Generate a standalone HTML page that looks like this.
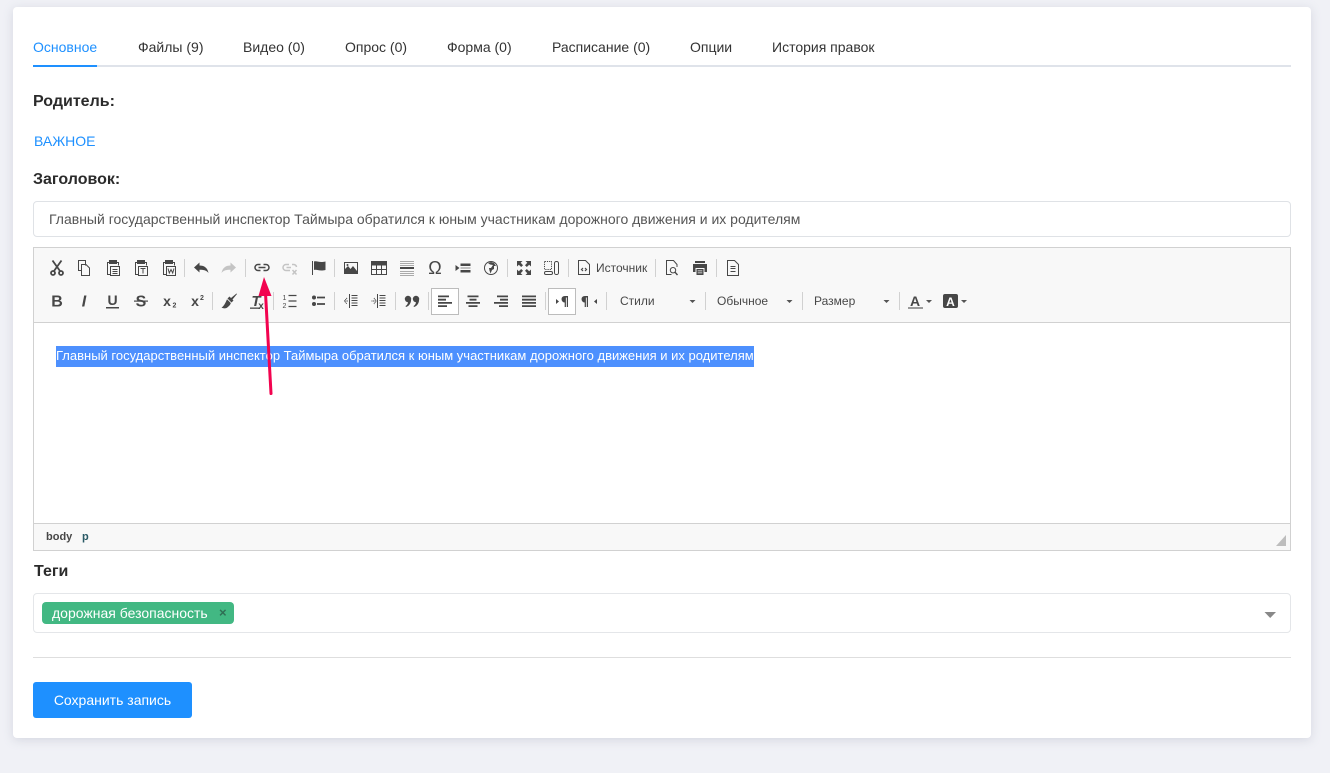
<!DOCTYPE html>
<html><head><meta charset="utf-8">
<style>
html,body{margin:0;padding:0}
body{width:1330px;height:773px;overflow:hidden;position:relative;background:#f0f1f6;font-family:"Liberation Sans",sans-serif;font-size:14px;color:#333}
.a{position:absolute;white-space:nowrap}
#card{left:13px;top:7px;width:1298px;height:731px;background:#fff;border-radius:4px;box-shadow:0 2px 10px rgba(150,155,175,.3)}
.t{top:39px;line-height:16px;color:#333}
.l{font-weight:bold;font-size:16px;color:#2b2b2b;line-height:18px}
</style></head><body>
<div class="a" id="card"></div>
<div class="a t" style="left:33px;color:#1e90ff">Основное</div>
<div class="a t" style="left:138px">Файлы (9)</div>
<div class="a t" style="left:243px">Видео (0)</div>
<div class="a t" style="left:345px">Опрос (0)</div>
<div class="a t" style="left:447px">Форма (0)</div>
<div class="a t" style="left:552px">Расписание (0)</div>
<div class="a t" style="left:690px">Опции</div>
<div class="a t" style="left:772px">История правок</div>
<div class="a" style="left:33px;top:65px;width:1258px;height:2px;background:#dfe3ea"></div>
<div class="a" style="left:33px;top:65px;width:64px;height:2px;background:#1e90ff"></div>

<div class="a l" style="left:33px;top:93px">Родитель:</div>
<div class="a" style="left:34px;top:133px;line-height:16px;color:#1e90ff">ВАЖНОЕ</div>
<div class="a l" style="left:33px;top:171px">Заголовок:</div>
<div class="a" style="left:33px;top:201px;width:1256px;height:34px;border:1px solid #dfe2e6;border-radius:4px;background:#fff"></div>
<div class="a" style="left:49px;top:211px;line-height:16px;color:#555">Главный государственный инспектор Таймыра обратился к юным участникам дорожного движения и их родителям</div>

<div class="a" style="left:33px;top:247px;width:1256px;height:302px;border:1px solid #d1d1d1;background:#fff"></div>
<div class="a" style="left:34px;top:248px;width:1256px;height:74px;background:#f8f8f8;border-bottom:1px solid #d1d1d1"></div>
<div class="a" style="left:34px;top:523px;width:1256px;height:26px;background:#f8f8f8;border-top:1px solid #d1d1d1"></div>

<div class="a" style="left:431px;top:288px;width:26px;height:25px;border:1px solid #bcbcbc;background:#fff"></div>
<div class="a" style="left:548px;top:288px;width:26px;height:25px;border:1px solid #bcbcbc;background:#fff"></div>

<svg class="a" style="left:0;top:0" width="1330" height="773" viewBox="0 0 1330 773">
<g fill="#d1d1d1">
<rect x="184" y="259" width="1" height="18"/><rect x="245" y="259" width="1" height="18"/><rect x="334" y="259" width="1" height="18"/><rect x="507" y="259" width="1" height="18"/><rect x="568" y="259" width="1" height="18"/><rect x="655" y="259" width="1" height="18"/><rect x="716" y="259" width="1" height="18"/>
<rect x="212" y="292" width="1" height="18"/><rect x="273" y="292" width="1" height="18"/><rect x="334" y="292" width="1" height="18"/><rect x="395" y="292" width="1" height="18"/><rect x="428" y="292" width="1" height="18"/><rect x="545" y="292" width="1" height="18"/><rect x="606" y="292" width="1" height="18"/><rect x="705" y="292" width="1" height="18"/><rect x="802" y="292" width="1" height="18"/><rect x="899" y="292" width="1" height="18"/>
</g>
<g fill="none" stroke="#474747" stroke-width="1">
<!-- cut -->
<g transform="translate(57,268)" stroke-width="1.800"><path d="M-4.500-7.500 3 3M4.500-7.500-3 3"/><circle cx="-4" cy="5" r="2"/><circle cx="4" cy="5" r="2"/></g>
<!-- copy -->
<g transform="translate(84,268)"><path d="M1.500-2.500V-7.500H-5.500V2.500H-2.500"/><path d="M-2.500-3.500H2L5.500 0V7.500H-2.500Z"/></g>
<!-- paste -->
<g transform="translate(113,268)"><path d="M-3-5.500H-5.500V6.500H-2.500M3-5.500H5.500V-2.500"/><rect x="-3.500" y="-7.500" width="7" height="3" fill="#474747"/><rect x="-2.500" y="-1.500" width="9" height="9"/><path d="M-.5 1.500H4.500M-.5 3.500H4.500M-.5 5.500H4.500"/></g>
<g transform="translate(141,268)"><path d="M-3-5.500H-5.500V6.500H-2.500M3-5.500H5.500V-2.500"/><rect x="-3.500" y="-7.500" width="7" height="3" fill="#474747"/><rect x="-2.500" y="-1.500" width="9" height="9"/><path d="M-.5.500H4.500M2 .5V5.500"/></g>
<g transform="translate(169,268)"><path d="M-3-5.500H-5.500V6.500H-2.500M3-5.500H5.500V-2.500"/><rect x="-3.500" y="-7.500" width="7" height="3" fill="#474747"/><rect x="-2.500" y="-1.500" width="9" height="9"/><path d="M-1 .5 .3 5 2 1.500 3.700 5 5 .5"/></g>
<!-- link -->
<g transform="translate(262,268)" stroke-width="1.500"><path d="M-1.500-3.500H-4A3 3 0 0 0-4 2.500H-1.500M1.500-3.500H4A3 3 0 0 1 4 2.500H1.500M-3.500-.5H3.500"/></g>
<!-- unlink -->
<g transform="translate(290,268)" stroke="#c4c4c4" stroke-width="1.500"><path d="M-1-3.500H-4A3 3 0 0 0-4 2.500H0M2-3.500H4A3 3 0 0 1 6.500-1M-3.500-.5H1"/><path d="M2.500 2 6.500 6.500M6.500 2 2.500 6.500"/></g>
<!-- image -->
<g transform="translate(351,268)"><rect x="-6.500" y="-5.500" width="13" height="11"/><path d="M-6 1-3-2-.5 1 2-2 6 3V5H-6Z" fill="#474747" stroke="none"/><circle cx="-3.500" cy="-3" r="1" fill="#474747" stroke="none"/></g>
<!-- table -->
<g transform="translate(379,268)"><rect x="-7.500" y="-6.500" width="15" height="13"/><rect x="-7.500" y="-6.500" width="15" height="3.500" fill="#474747"/><path d="M-7.500 1.500H7.500M-2.500-3V6.500M2.500-3V6.500"/></g>
<!-- globe -->
<g transform="translate(491,268)"><circle r="6.500"/><path d="M-3-5-1-3.500 2-3 0 0-2 0-1.500 2.500-.5 5.500 1 2 3 1 3-2 5-2 3-5 0-6Z" fill="#474747" stroke="none"/></g>
<!-- source doc -->
<g transform="translate(584,268)"><path d="M-5.500-7.500H1.500L5.500-3.500V6.500H-5.500Z"/><path d="M-1 0-2.500 1.500-1 3M1 0 2.500 1.500 1 3" stroke-width="1.200"/></g>
<!-- blocks -->
<g transform="translate(552,268)" stroke-width="1"><path d="M-7.500-6.500V1.500H-.5V-6.500Z" stroke-dasharray="1.200 1"/><rect x="-7.500" y="3.500" width="8" height="3" rx="1.400"/><rect x="2.500" y="-6.500" width="4" height="13" rx="1.800"/></g>
<!-- preview -->
<g transform="translate(672,268)"><path d="M-.5 6.500H-5.500V-7.500H1.500L5-3.500V-1"/><circle cx="1" cy="2.200" r="2.700"/><path d="M3 4.200 5.500 7" stroke-width="1.400"/></g>
<!-- templates -->
<g transform="translate(733,268)"><path d="M-5.500-7.500H1.500L5.500-3.500V7.500H-5.500Z"/><path d="M-2.500-1.500H2.500M-2.500 .5H2.500M-2.500 3.500H2.500"/></g>
<!-- lists -->
<g transform="translate(290,301)"><path d="M-1.500-5.500H6.500M-1.500 0H6.500M-1.500 5.500H6.500" stroke-width="1.200"/></g>
<g transform="translate(318,301)"><path d="M-1-3.500H7M-1 3H7" stroke-width="1.700"/></g>
<!-- outdent / indent -->
<g transform="translate(351,301)"><path d="M-1.500-7V7"/><path d="M.5-5.500H6.500M.5-3H6.500M.5-.5H6.500M.5 2H6.500M.5 4.500H6.500" stroke-width="1"/><path d="M-4-3-6.500 0-4 3M-7 0H-3" stroke-width="1" stroke-dasharray="1 .6"/></g>
<g transform="translate(379,301)"><path d="M-1.500-7V7"/><path d="M.5-5.500H6.500M.5-3H6.500M.5-.5H6.500M.5 2H6.500M.5 4.500H6.500" stroke-width="1"/><path d="M-5-3-3 0-5 3M-7.500 0H-3" stroke-width="1" stroke-dasharray="1 .6"/></g>
</g>
<g fill="#474747">
<!-- undo / redo -->
<path transform="translate(201,268)" d="M-7-.5-1.500-5.500V-2.500C3-2.500 6.500-.5 7.500 5 5.500 2.500 3 1.800-1.500 1.800V4.500Z"/>
<path transform="translate(229,268)" d="M7-.5 1.500-5.500V-2.500C-3-2.500-6.500-.5-7.500 5-5.500 2.500-3 1.800 1.500 1.800V4.500Z" fill="#c4c4c4"/>
<!-- flag -->
<g transform="translate(319,268)"><rect x="-7" y="-7" width="1" height="14"/><path d="M-5-6.500C-2-7.500 0-5 6.500-6.500V2C0 3.500-2 1-5 2Z"/></g>
<!-- hr -->
<g transform="translate(407,268)"><rect x="-7" y="-1" width="14" height="2"/><path d="M-7-7H7V-6H-7ZM-7-5H7V-4H-7ZM-7-3H7V-2H-7ZM-7 3H7V4H-7ZM-7 5H7V6H-7ZM-7 7H7V8H-7Z" fill="#aaa"/></g>
<!-- iframe -->
<g transform="translate(463,268)"><path d="M-7.500-3-3.500 0-7.500 3Z"/><rect x="-2.500" y="-4.500" width="10" height="2.500"/><rect x="-2.500" y="2" width="10" height="2.500"/><path d="M-2.500-.5H7.500V.5H-2.500Z" fill="#888"/></g>
<!-- maximize -->
<g transform="translate(524,268)"><path d="M-7-7H-1.500L-3.300-5.200-1-2.800-2.800-1-5.200-3.300-7-1.500ZM7-7H1.500L3.300-5.200 1-2.800 2.800-1 5.200-3.300 7-1.500ZM-7 7H-1.500L-3.300 5.200-1 2.800-2.800 1-5.200 3.300-7 1.500ZM7 7H1.500L3.300 5.200 1 2.800 2.800 1 5.200 3.300 7 1.500Z"/></g>
<!-- print -->
<g transform="translate(700,268)"><rect x="-5" y="-7" width="10" height="2"/><path d="M-7-4H7V4H4.500V0H-4.500V4H-7Z"/><path d="M-3.500 1H3.500V7H-3.500ZM-2.300 2.500V3.300H2.300V2.500ZM-2.300 4.500V5.300H2.300V4.500Z" fill-rule="evenodd"/></g>
<!-- ol -->
<text x="282.500" y="300" font-family="Liberation Sans" font-size="7">1</text><text x="282.500" y="308" font-family="Liberation Sans" font-size="7">2</text>
<!-- ul -->
<circle cx="314" cy="297.500" r="2"/><circle cx="314" cy="304" r="2"/>
<!-- quote -->
<g transform="translate(412,301)"><circle cx="-4" cy="-2" r="3.200"/><path d="M-1-2.500C-.5 1.500-2.500 5-6 6L-6.500 5C-4.500 4-4 2-4 .5Z"/><circle cx="4" cy="-2" r="3.200"/><path d="M7-2.500C7.500 1.500 5.500 5 2 6L1.500 5C3.500 4 4 2 4 .5Z"/></g>
<!-- brush -->
<path transform="translate(229,301)" d="M2-3 7.500-7.500 8-7 3.500-1.500 4.500-.5 2.500 1.500-1.500-2.500.5-4.500ZM-2-1.800 1.800 2C1.500 4-1 6-2.500 7-4 7.500-6 7.500-7.500 6.500-5.500 5.500-3.500 2-2-1.800Z"/>
<!-- alignments -->
<path transform="translate(445,301)" d="M-7-5.500H4V-3.700H-7ZM-7-2.200H1V-.4H-7ZM-7 1H7V2.800H-7ZM-7 4.200H2V6H-7Z"/>
<path transform="translate(473,301)" d="M-5.500-5.500H5.500V-3.700H-5.500ZM-3.500-2.200H3.500V-.4H-3.500ZM-7 1H7V2.800H-7ZM-4.500 4.200H4.500V6H-4.500Z"/>
<path transform="translate(501,301)" d="M-4-5.500H7V-3.700H-4ZM-1-2.200H7V-.4H-1ZM-7 1H7V2.800H-7ZM-2 4.200H7V6H-2Z"/>
<path transform="translate(529,301)" d="M-7-5.500H7V-3.700H-7ZM-7-2.200H7V-.4H-7ZM-7 1H7V2.800H-7ZM-7 4.200H7V6H-7Z"/>
<!-- ltr / rtl -->
<path d="M556 299 559 301.500 556 304Z"/>
<path d="M566 296H569V307H567.800V297.500H566.900V307H565.700V302.500C562 302.500 561 296 566 296Z" transform="translate(-1,0)"/>
<path d="M586 296H589V307H587.800V297.500H586.900V307H585.700V302.500C582 302.500 581 296 586 296Z" transform="translate(-1,0)"/>
<path d="M597 299 594 301.500 597 304Z"/>
<!-- combo arrows -->
<path d="M689.500 300H695.500L692.500 303ZM786.500 300H792.500L789.500 303ZM883.500 300H889.500L886.500 303ZM926 300H932L929 303ZM961 300H967L964 303Z" fill="#555"/>
<!-- colors -->
<rect x="908" y="307" width="15" height="2" fill="#9a9a9a"/>
<rect x="943" y="294" width="15" height="14" rx="2"/>
<!-- resize -->
<path d="M1286 535V546H1276Z" fill="#bdbdbd"/>
</g>
<g font-family="Liberation Sans" fill="#474747" text-anchor="middle">
<text x="57" y="306.500" font-size="16" font-weight="bold">B</text>
<text x="84" y="306.500" font-size="16" font-weight="bold" font-style="italic">I</text>
<text x="112.500" y="305" font-size="14" font-weight="bold">U</text><rect x="106" y="307" width="13" height="1.500"/>
<text x="141" y="306.500" font-size="16" font-weight="bold">S</text><rect x="134" y="300.500" width="14" height="1.200"/>
<text x="167" y="306" font-size="14" font-weight="bold">x</text><text x="174.500" y="307.500" font-size="7" font-weight="bold">2</text>
<text x="195" y="306" font-size="14" font-weight="bold">x</text><text x="202" y="300" font-size="7" font-weight="bold">2</text>
<text x="256" y="306" font-size="15" font-weight="bold" font-style="italic">T</text><rect x="250" y="307.500" width="10" height="1.300"/><text x="261" y="309" font-size="10" font-weight="bold">x</text>
<text x="435" y="274" font-size="18">Ω</text>
<text x="915" y="306" font-size="14" font-weight="bold">A</text>
<text x="950.500" y="306" font-size="12" font-weight="bold" fill="#fff">A</text>
</g>
</svg>

<div class="a" style="left:596px;top:260px;font-size:12px;line-height:16px;color:#474747">Источник</div>
<div class="a" style="left:620px;top:293px;font-size:12px;line-height:16px;color:#484848">Стили</div>
<div class="a" style="left:717px;top:293px;font-size:12px;line-height:16px;color:#484848">Обычное</div>
<div class="a" style="left:814px;top:293px;font-size:12px;line-height:16px;color:#484848">Размер</div>

<div class="a" style="left:56px;top:346px;height:21px;line-height:20px;width:697.500px;background:#4d90fe;color:#fff;font-size:13px">Главный государственный инспектор Таймыра обратился к юным участникам дорожного движения и их родителям</div>

<div class="a" style="left:46px;top:530px;font-size:11px;line-height:14px;font-weight:bold;color:#474747">body</div>
<div class="a" style="left:82px;top:530px;font-size:11px;line-height:14px;font-weight:bold;color:#2a5a66">p</div>

<div class="a l" style="left:34px;top:563px">Теги</div>
<div class="a" style="left:33px;top:593px;width:1256px;height:38px;border:1px solid #e4e6e9;border-radius:4px;background:#fff"></div>
<div class="a" style="left:42px;top:602px;width:192px;height:22px;background:#42b883;border-radius:4px"></div>
<div class="a" style="left:52px;top:605px;line-height:16px;color:#fff">дорожная безопасность</div>
<div class="a" style="left:219px;top:605px;font-size:13px;line-height:16px;font-weight:bold;color:#2f6e54">×</div>

<div class="a" style="left:33px;top:657px;width:1258px;height:1px;background:#dedede"></div>
<div class="a" style="left:33px;top:682px;width:159px;height:36px;line-height:36px;text-align:center;background:#1e90ff;border-radius:3px;color:#fff">Сохранить запись</div>

<svg class="a" style="left:0;top:0" width="1330" height="773" viewBox="0 0 1330 773">
<path d="M1264.500 612H1276L1270.200 618Z" fill="#888"/>
<path d="M265.500 293 271 393.500" stroke="#f2034f" stroke-width="3" fill="none" stroke-linecap="round"/>
<path d="M264 277 271.500 296H258.500Z" fill="#f2034f"/>
</svg>
</body></html>
